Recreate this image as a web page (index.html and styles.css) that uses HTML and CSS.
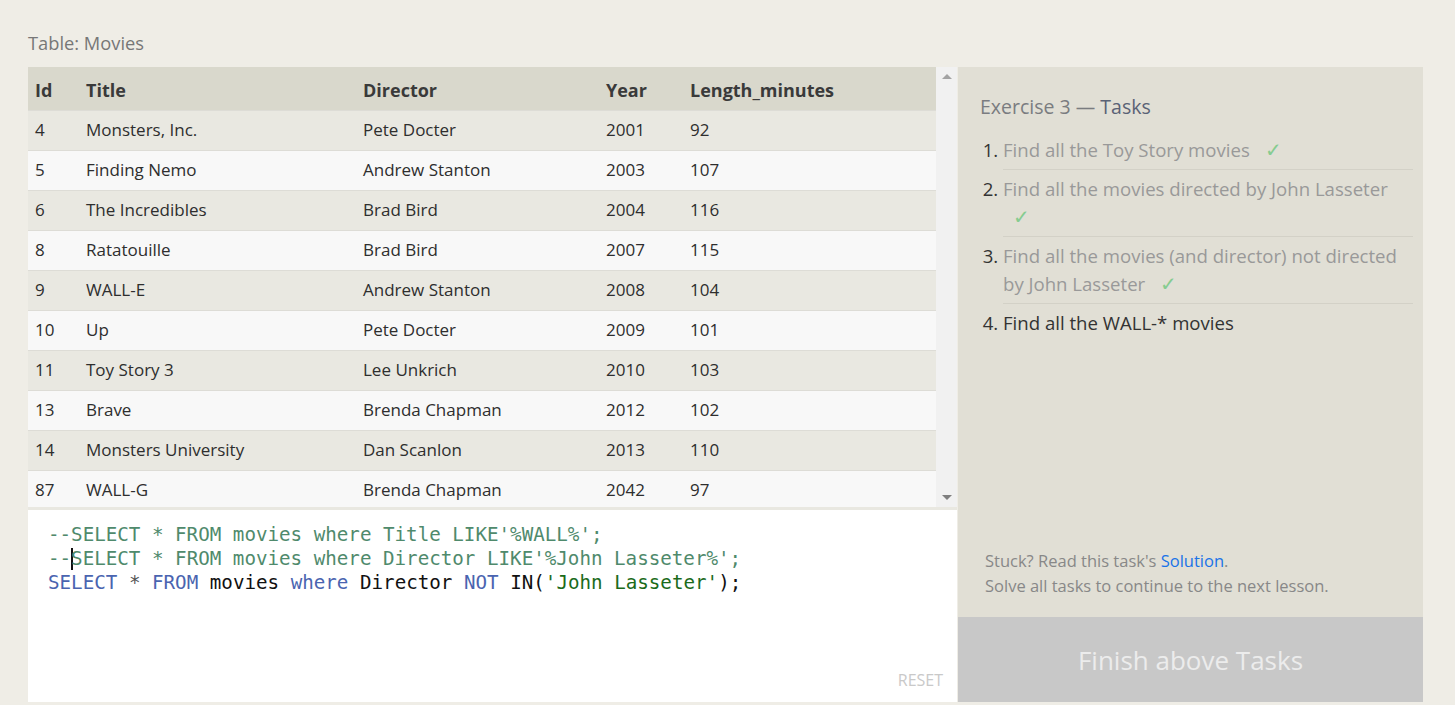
FILE: index.html
```html
<!DOCTYPE html>
<html lang="en">
<head>
<meta charset="utf-8">
<title>SQL Lesson — Exercise 3</title>
<link rel="stylesheet" href="styles.css">
</head>
<body>
<div class="page">
  <div class="table-label">Table: Movies</div>
  <div class="main">
    <div class="left">
      <div class="table-box">
        <div class="table-scroll">
          <table class="movies">
            <thead>
              <tr><th class="c-id">Id</th><th class="c-title">Title</th><th class="c-dir">Director</th><th class="c-year">Year</th><th class="c-len">Length_minutes</th></tr>
            </thead>
            <tbody>
              <tr><td>4</td><td>Monsters, Inc.</td><td>Pete Docter</td><td>2001</td><td>92</td></tr>
              <tr><td>5</td><td>Finding Nemo</td><td>Andrew Stanton</td><td>2003</td><td>107</td></tr>
              <tr><td>6</td><td>The Incredibles</td><td>Brad Bird</td><td>2004</td><td>116</td></tr>
              <tr><td>8</td><td>Ratatouille</td><td>Brad Bird</td><td>2007</td><td>115</td></tr>
              <tr><td>9</td><td>WALL-E</td><td>Andrew Stanton</td><td>2008</td><td>104</td></tr>
              <tr><td>10</td><td>Up</td><td>Pete Docter</td><td>2009</td><td>101</td></tr>
              <tr><td>11</td><td>Toy Story 3</td><td>Lee Unkrich</td><td>2010</td><td>103</td></tr>
              <tr><td>13</td><td>Brave</td><td>Brenda Chapman</td><td>2012</td><td>102</td></tr>
              <tr><td>14</td><td>Monsters University</td><td>Dan Scanlon</td><td>2013</td><td>110</td></tr>
              <tr><td>87</td><td>WALL-G</td><td>Brenda Chapman</td><td>2042</td><td>97</td></tr>
            </tbody>
          </table>
        </div>
        <div class="scrollbar">
          <span class="arrow up"></span>
          <span class="arrow down"></span>
        </div>
      </div>
      <div class="editor">
        <div class="code">
          <div class="line"><span class="cm">--SELECT * FROM movies where Title LIKE'%WALL%';</span></div>
          <div class="line"><span class="cm">--<span class="cursor"></span>SELECT * FROM movies where Director LIKE'%John Lasseter%';</span></div>
          <div class="line"><span class="kw">SELECT</span> <span class="op">*</span> <span class="kw">FROM</span> <span class="id">movies</span> <span class="kw">where</span> <span class="id">Director</span> <span class="kw">NOT</span> <span class="id">IN(</span><span class="str">'John Lasseter'</span><span class="id">);</span></div>
        </div>
        <div class="reset">RESET</div>
      </div>
    </div>
    <div class="right">
      <div class="tasks">
        <h3 class="tasks-title"><span class="ex">Exercise 3 —</span> <span class="tk">Tasks</span></h3>
        <ol class="task-list">
          <li class="done">Find all the Toy Story movies <span class="check">✓</span></li>
          <li class="done">Find all the movies directed by John Lasseter <span class="check">✓</span></li>
          <li class="done">Find all the movies (and director) not directed by John Lasseter <span class="check">✓</span></li>
          <li class="current">Find all the WALL-* movies</li>
        </ol>
        <div class="help">
          <div>Stuck? Read this task's <a href="#" class="link">Solution</a>.</div>
          <div>Solve all tasks to continue to the next lesson.</div>
        </div>
      </div>
      <div class="finish">Finish above Tasks</div>
    </div>
  </div>
</div>
</body>
</html>
```
FILE: styles.css
```css
* { box-sizing: border-box; }
html, body { margin: 0; padding: 0; }
body {
  background: #efede6;
  font-family: "Open Sans", "Noto Sans", sans-serif;
  color: #333;
  height: 705px;
  overflow: hidden;
}
.page {
  padding: 30px 32px 0 28px;
}
.table-label {
  font-size: 18.3px;
  line-height: 26px;
  color: #777;
  margin-bottom: 11px;
}
.main {
  display: flex;
  height: 635px;
}
.left {
  width: 929px;
  display: flex;
  flex-direction: column;
  min-height: 0;
}
.table-box {
  display: flex;
  height: 440px;
  flex: none;
}
.table-scroll {
  width: 908px;
  overflow: hidden;
}
.movies {
  width: 100%;
  border-collapse: collapse;
  font-size: 17px;
  color: #2e2e2e;
}
.movies th {
  text-align: left;
  font-weight: 700;
  font-size: 18px;
  height: 43px;
  padding: 3px 7px 0;
  background: #d9d8cc;
  color: #3a3a3a;
}
.movies td {
  height: 40px;
  padding: 0 7px 2px;
  border-top: 1px solid #dddcd6;
}
.movies tbody tr:nth-child(odd) td { background: #e9e8e1; }
.movies tbody tr:nth-child(even) td { background: #f8f8f8; }
.c-id { width: 51px; }
.c-title { width: 277px; }
.c-dir { width: 243px; }
.c-year { width: 84px; }
.scrollbar {
  width: 21px;
  background: #f1f1f1;
  display: flex;
  flex-direction: column;
  justify-content: space-between;
  align-items: center;
  padding: 7px 0 7px;
}
.arrow {
  width: 0;
  height: 0;
  border-left: 5px solid transparent;
  border-right: 5px solid transparent;
}
.arrow.up { border-bottom: 5px solid #a3a3a3; }
.arrow.down { border-top: 5px solid #7f7f7f; }
.editor {
  flex: 1;
  min-height: 0;
  background: #fff;
  border-top: 3px solid #e9e8e1;
  display: flex;
  flex-direction: column;
  padding: 13px 14px 12px 20px;
}
.code {
  font-family: "DejaVu Sans Mono", "Liberation Mono", monospace;
  font-size: 19.2px;
  line-height: 24px;
}
.line { white-space: pre; height: 24px; }
.cm { color: #4f8a6c; }
.kw { color: #4a64b0; }
.op { color: #555; }
.id { color: #111; }
.str { color: #1b6b1b; }
.cursor {
  display: inline-block;
  width: 0;
  height: 22px;
  border-left: 2px solid #111;
  vertical-align: -5px;
  margin-right: -2px;
}
.reset {
  margin-top: auto;
  align-self: flex-end;
  color: #c9c9c9;
  font-size: 16px;
  line-height: 20px;
}
.right {
  width: 465px;
  margin-left: 1px;
  display: flex;
  flex-direction: column;
}
.tasks {
  flex: 1;
  background: #e1dfd5;
  padding: 26px 10px 19px 22px;
  display: flex;
  flex-direction: column;
}
.tasks-title {
  margin: 0 0 10px;
  font-weight: 400;
  font-size: 19.5px;
  line-height: 28px;
}
.ex { color: #7a7c80; }
.tk { color: #5a6275; }
.task-list {
  margin: 0;
  padding: 0 0 0 23px;
  font-size: 18.6px;
  line-height: 28px;
  color: #333;
}
.task-list li {
  padding: 5px 0 5px;
  border-bottom: 1px solid #d3d1c7;
}
.task-list li::marker { color: #333; }
.task-list li.done { color: #999; }
.task-list li.current { border-bottom: none; }
.check {
  color: #86cc90;
  margin-left: 10px;
  font-size: 20px;
}
.help {
  margin-top: auto;
  padding-left: 5px;
  font-size: 16.5px;
  line-height: 25px;
  color: #888;
}
.link { color: #1a73e8; text-decoration: none; }
.finish {
  height: 85px;
  flex: none;
  background: #c8c8c8;
  color: #ececec;
  font-size: 26px;
  display: flex;
  align-items: center;
  justify-content: center;
}
```
